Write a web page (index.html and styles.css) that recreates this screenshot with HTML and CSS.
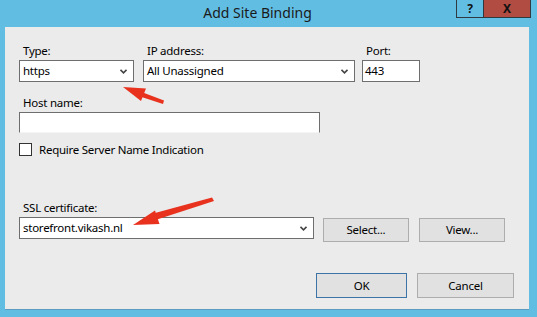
FILE: index.html
```html
<!DOCTYPE html>
<html>
  <head>
    <title>Add Site Binding</title>
    <link rel="stylesheet" href="styles.css">
  </head>
  <body>
    <div class="window">
      <div class="titlebar">
        <div class="title">Add Site Binding</div>
        <div class="caption-btns">
          <div class="cap-help">?</div>
          <div class="cap-close">X</div>
        </div>
      </div>
      <div class="client">
        <!--binding row-->
        <div class="row">
          <div class="field f-type">
            <label>Type:</label>
            <div class="select">
              <span>https</span>
              <svg class="chev" width="7" height="5" viewBox="0 0 7 5"><path d="M0.5 0.8 L3.5 3.8 L6.5 0.8" fill="none" stroke="#444" stroke-width="1.6"/></svg>
            </div>
          </div>
          <div class="field f-ip">
            <label>IP address:</label>
            <div class="select">
              <span>All Unassigned</span>
              <svg class="chev" width="7" height="5" viewBox="0 0 7 5"><path d="M0.5 0.8 L3.5 3.8 L6.5 0.8" fill="none" stroke="#444" stroke-width="1.6"/></svg>
            </div>
          </div>
          <div class="field f-port">
            <label>Port:</label>
            <div class="textbox">443</div>
          </div>
        </div>
        <div class="field f-host">
          <label>Host name:</label>
          <div class="textbox host"></div>
        </div>
        <div class="check">
          <span class="box"></span>
          <span>Require Server Name Indication</span>
        </div>
        <div class="field f-ssl">
          <label>SSL certificate:</label>
          <div class="ssl-row">
            <div class="select ssl">
              <span>storefront.vikash.nl</span>
              <svg class="chev" width="7" height="5" viewBox="0 0 7 5"><path d="M0.5 0.8 L3.5 3.8 L6.5 0.8" fill="none" stroke="#444" stroke-width="1.6"/></svg>
            </div>
            <div class="btn b-select">Select...</div>
            <div class="btn b-view">View...</div>
          </div>
        </div>
        <div class="footer">
          <div class="btn b-ok">OK</div>
          <div class="btn b-cancel">Cancel</div>
        </div>
      </div>
      <!--red arrows drawn over the screenshot-->
      <svg class="arrows" width="537" height="317" viewBox="0 0 537 317">
        <polygon points="164,100.5 163,104 140,96.5 141.5,92" fill="#e8321e"/>
        <polygon points="123,87 146,88.5 141,101" fill="#e8321e"/>
        <polygon points="212,197.5 214,201 157,219.5 155,213" fill="#e8321e"/>
        <polygon points="133,225 155,210.5 159.5,224" fill="#e8321e"/>
      </svg>
    </div>
  </body>
</html>
```
FILE: styles.css
```css
body {
  margin: 0;
  font-family: "Noto Sans", "Open Sans", sans-serif;
  font-size: 11.5px;
  letter-spacing: -0.25px;
  color: #000;
}
.window {
  position: relative;
  width: 537px;
  height: 317px;
  box-sizing: border-box;
  background-color: #62bde3;
  padding: 0 8px 7px 5px;
  display: flex;
  flex-direction: column;
}
.titlebar {
  height: 27px;
  display: flex;
  align-items: flex-start;
  margin-left: -5px;
  margin-right: -8px;
}
.title {
  flex: 1;
  text-align: center;
  padding-left: 59px;
  font-size: 14px;
  letter-spacing: 0;
  line-height: 25px;
  color: #1a1a1a;
}
.caption-btns {
  display: flex;
  margin-right: 6px;
}
.cap-help,
.cap-close {
  height: 17px;
  line-height: 17px;
  text-align: center;
  font-weight: bold;
  font-size: 12px;
  border: 1px solid #2f3a40;
  border-top: none;
}
.cap-help {
  width: 26px;
  border-right: none;
  color: #111;
}
.cap-close {
  width: 46px;
  background-color: #b14c43;
  color: #111;
}
.client {
  flex: 1;
  background-color: #ebebeb;
  border-bottom: 1px solid #5b9cc2;
  padding: 16px 0 0 14px;
}
.row {
  display: flex;
}
.field label {
  display: block;
  padding-left: 4px;
  line-height: 15px;
  margin-bottom: 2px;
}
.f-type {
  width: 115px;
  margin-right: 9px;
}
.f-ip {
  width: 212px;
  margin-right: 7px;
}
.f-port {
  width: 58px;
}
.select,
.textbox {
  box-sizing: border-box;
  height: 22px;
  border: 1px solid #6e6e6e;
  background-color: #fff;
  line-height: 20px;
  padding-left: 3px;
}
.select {
  display: flex;
  align-items: center;
  justify-content: space-between;
  padding-right: 6px;
}
.chev {
  margin-top: 1px;
}
.textbox {
  padding-left: 2px;
}
.f-host {
  margin-top: 13px;
}
.textbox.host {
  width: 301px;
  height: 21px;
  border-bottom-color: #f4f4f4;
}
.check {
  display: flex;
  align-items: center;
  margin-top: 9px;
  height: 15px;
}
.check .box {
  width: 11px;
  height: 11px;
  border: 1px solid #333;
  background-color: #fff;
  margin-right: 7px;
}
.f-ssl {
  margin-top: 43px;
}
.ssl-row {
  display: flex;
  align-items: flex-start;
}
.select.ssl {
  width: 295px;
  margin-right: 9px;
}
.btn {
  box-sizing: border-box;
  border: 1px solid #adadad;
  background-color: #e1e1e1;
  text-align: center;
}
.b-select,
.b-view {
  width: 86px;
  height: 24px;
  line-height: 22px;
  margin-top: 1px;
}
.b-view {
  margin-left: 10px;
}
.footer {
  display: flex;
  margin-top: 31px;
  padding-left: 297px;
}
.b-ok,
.b-cancel {
  height: 25px;
  line-height: 23px;
}
.b-ok {
  width: 91px;
  border-color: #3c74a8;
}
.b-cancel {
  width: 97px;
  margin-left: 10px;
}
.arrows {
  position: absolute;
  left: 0;
  top: 0;
  pointer-events: none;
}
```
